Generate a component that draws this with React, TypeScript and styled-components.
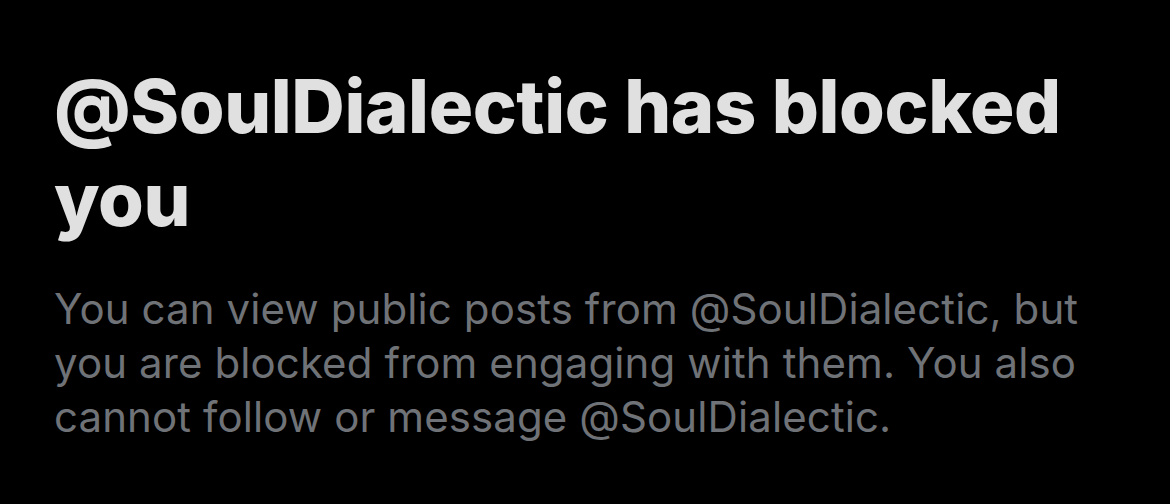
import React from "react";
import styled, { createGlobalStyle } from "styled-components";

const Global = createGlobalStyle`
  html, body {
    margin: 0;
    padding: 0;
    background: #000;
  }
  #root {
    min-height: 504px;
    background: #000;
  }
`;

const Screen = styled.main`
  box-sizing: border-box;
  width: 1170px;
  height: 504px;
  background: #000;
  padding: 60px 0 0 54px;
  overflow: hidden;
`;

const Content = styled.section`
  width: 1060px;
  display: flex;
  flex-direction: column;
  gap: 36px;
`;

const Title = styled.h1`
  margin: 0;
  max-width: 1040px;
  font-family: Inter, "Liberation Sans", sans-serif;
  font-weight: 800;
  font-size: 74px;
  line-height: 93px;
  letter-spacing: -0.4px;
  color: #e0e0e0;
`;

const Description = styled.p`
  margin: 0;
  font-family: Inter, "Liberation Sans", sans-serif;
  font-weight: 400;
  font-size: 42px;
  line-height: 54px;
  letter-spacing: 0.1px;
  color: #6f7276;
`;

export default function App() {
  return (
    <>
      <Global />
      <Screen>
        <Content>
          <Title>@SoulDialectic has blocked you</Title>
          <Description>
            You can view public posts from @SoulDialectic, but you are blocked
            from engaging with them. You also cannot follow or message
            @SoulDialectic.
          </Description>
        </Content>
      </Screen>
    </>
  );
}
